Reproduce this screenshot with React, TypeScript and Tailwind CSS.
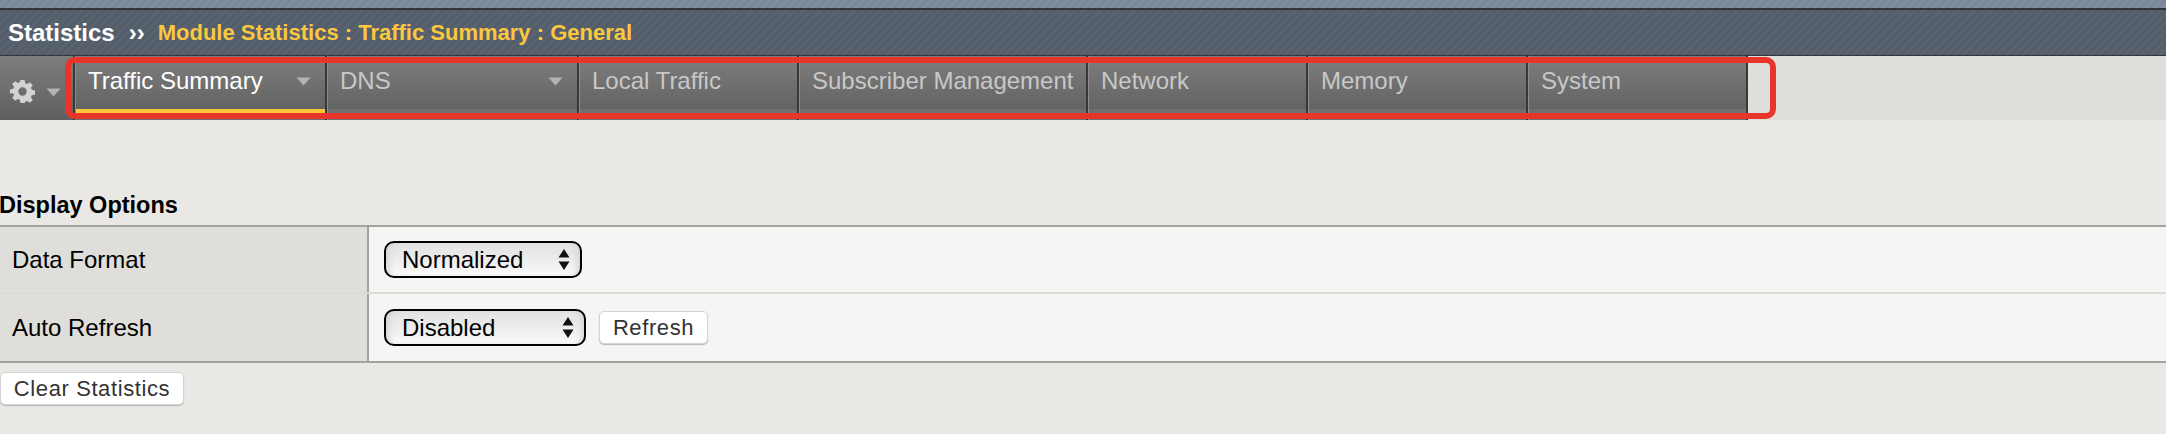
const font = "font-['Liberation_Sans',Arial,sans-serif]";

function Caret({ className }: { className: string }) {
  return (
    <svg viewBox="0 0 15 9" className={className}>
      <path d="M0.5 0.5H14.5L7.5 8.5Z" fill="#b4b4b4" />
    </svg>
  );
}

function Tab({ label, w, active, caret }: { label: string; w: string; active?: boolean; caret?: boolean }) {
  return (
    <div className={`${w} h-full shrink-0 flex flex-col border-l-2 border-[#36383a]`}>
      <div className="border-l border-[#8c8c8c] h-full flex flex-col">
        <div className="flex-1 flex items-start justify-between pl-[12px] pr-[14px] pt-[11px] bg-gradient-to-b from-[#7e7e7e] to-[#636363]">
          <span className={`text-[24px] leading-[28px] whitespace-nowrap ${active ? "text-white" : "text-[#c8c8c8]"}`}>{label}</span>
          {caret && <Caret className="w-[15px] h-[9px] mt-[10px]" />}
        </div>
        <div className={`h-[5px] ${active ? "bg-[#fcc73f]" : "bg-[#6f6f6f]"}`} />
        <div className="h-[6px] bg-[#6f6f6f]" />
      </div>
    </div>
  );
}

function Stepper() {
  return (
    <svg viewBox="0 0 12 21" className="w-[12px] h-[21px]">
      <path d="M6 0L11.5 8.500H0.5Z M6 21L0.5 12.500H11.500Z" fill="#111" />
    </svg>
  );
}

function Select({ label, w }: { label: string; w: string }) {
  return (
    <div className={`${w} h-[37px] flex items-center justify-between pl-[16px] pr-[10px] rounded-[10px] border-2 border-black bg-gradient-to-b from-[#e2e2e2] via-[#ececec] to-[#fbfbfb] shadow-[inset_6px_0_6px_-4px_#cfcfcf,inset_-6px_0_6px_-4px_#cfcfcf]`}>
      <span className="text-[24px] leading-none text-black">{label}</span>
      <Stepper />
    </div>
  );
}

function Btn({ label, w }: { label: string; w: string }) {
  return (
    <div className={`${w} h-[33px] flex items-center justify-center rounded-[5px] bg-white border border-[#d4d4d4] shadow-[0_1px_1px_#b5b5b5] text-[22px] leading-none text-[#333] tracking-[0.6px]`}>
      {label}
    </div>
  );
}

export default function App() {
  return (
    <div className={`${font} w-[2166px] h-[434px] overflow-hidden bg-[#e9e8e4] relative`}>
      <div className="h-[8px] bg-[repeating-linear-gradient(135deg,#7a8798_0px,#7a8798_3px,#808d9d_3px,#808d9d_6px)]" />
      <div className="h-[2px] bg-[#33373b]" />
      <div className="h-[45px] flex items-center pl-[8px] font-bold bg-[repeating-linear-gradient(135deg,#535e6a_0px,#535e6a_3px,#58636f_3px,#58636f_6px)]">
        <span className="text-white text-[24px]">Statistics</span>
        <span className="text-white text-[24px] ml-[14px]">››</span>
        <span className="text-[#fcc73f] text-[22px] ml-[13px]">Module Statistics : Traffic Summary : General</span>
      </div>
      <div className="h-px bg-[#33373b]" />
      <div className="h-[64px] flex bg-[#dfdeda]">
        <div className="w-[73px] h-full shrink-0 flex items-center pl-[10px] pt-[7px] gap-[11px] bg-gradient-to-b from-[#7e7e7e] to-[#5f5f5f]">
          <svg viewBox="0 0 24 24" className="w-[25px] h-[25px]">
            <path
              fillRule="evenodd"
              fill="#d2d2d2"
              d="M10 1h4l.6 3.1 1.9.8 2.6-1.8 2.8 2.8-1.8 2.6.8 1.9 3.1.6v4l-3.1.6-.8 1.9 1.8 2.6-2.8 2.8-2.6-1.8-1.9.8L14 23h-4l-.6-3.1-1.9-.8-2.6 1.8-2.8-2.8 1.8-2.6-.8-1.9L0 14v-4l3.1-.6.8-1.9L2.100 4.900l2.800-2.800L7.500 3.900l1.900-.8zM12 8a4 4 0 1 0 0 8 4 4 0 0 0 0-8z"
            />
          </svg>
          <Caret className="w-[15px] h-[9px] mt-[2px]" />
        </div>
        <Tab label="Traffic Summary" w="w-[252px]" active caret />
        <Tab label="DNS" w="w-[252px]" caret />
        <Tab label="Local Traffic" w="w-[220px]" />
        <Tab label="Subscriber Management" w="w-[289px]" />
        <Tab label="Network" w="w-[220px]" />
        <Tab label="Memory" w="w-[220px]" />
        <Tab label="System" w="w-[220px]" />
        <div className="w-[2px] h-full bg-[#36383a]" />
      </div>

      <div className="pt-[71px]">
        <h2 className="h-[34px] -ml-px font-bold text-[23.5px] leading-[28px] text-black">Display Options</h2>
        <div className="border-t-2 border-b-2 border-[#a2a2a0]">
          <div className="flex h-[67px] border-b-2 border-[#dbdad6]">
            <div className="w-[369px] shrink-0 bg-[#dfdeda] border-r-2 border-[#a2a2a0] flex items-center pl-[12px] text-[24px] text-black">Data Format</div>
            <div className="flex-1 bg-[#f6f5f3] flex items-center pl-[15px]">
              <Select label="Normalized" w="w-[198px]" />
            </div>
          </div>
          <div className="flex h-[67px]">
            <div className="w-[369px] shrink-0 bg-[#dfdeda] border-r-2 border-[#a2a2a0] flex items-center pl-[12px] text-[24px] text-black">Auto Refresh</div>
            <div className="flex-1 bg-[#f6f5f3] flex items-center pl-[15px] gap-[13px]">
              <Select label="Disabled" w="w-[202px]" />
              <Btn label="Refresh" w="w-[109px]" />
            </div>
          </div>
        </div>
        <div className="pt-[9px]">
          <Btn label="Clear Statistics" w="w-[184px]" />
        </div>
      </div>

      <div className="absolute left-[65px] top-[57px] w-[1711px] h-[62px] rounded-[10px] border-[6px] border-[#e8352b]" />
    </div>
  );
}
